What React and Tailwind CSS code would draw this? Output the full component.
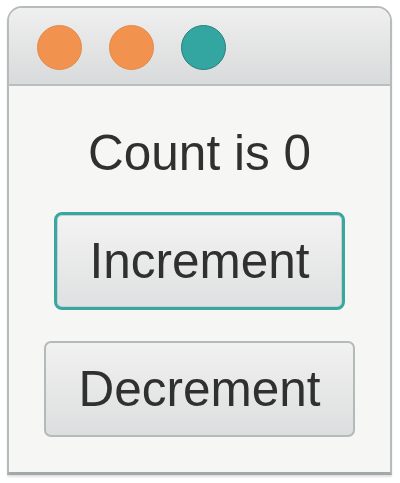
import { useState } from 'react'

export default function App() {
  const [count, setCount] = useState(0)

  return (
    <div className="w-[400px] h-[483px] bg-white pt-[6px] pl-[7px]" style={{ fontFamily: '"Liberation Sans", Arial, sans-serif' }}>
      <div className="w-[385px] h-[469px] flex flex-col rounded-t-[15px] border-2 border-b-[3px] border-[#b6bbbb] border-b-[#a3a8a8] overflow-hidden shadow-[0_2px_2px_rgba(0,0,0,0.12)]">
        {/* title bar */}
        <div className="h-[78px] shrink-0 flex items-center gap-[27px] pl-[28px] pt-[3px] bg-gradient-to-b from-[#efefef] to-[#d9dadb] border-b-2 border-[#b9bebe]">
          <span className="w-[45px] h-[45px] rounded-full bg-[#f1934f] border border-[#e48a4b]" />
          <span className="w-[45px] h-[45px] rounded-full bg-[#f1934f] border border-[#e48a4b]" />
          <span className="w-[45px] h-[45px] rounded-full bg-[#33a6a1] border border-[#2a7f7c]" />
        </div>

        {/* content */}
        <div className="flex-1 bg-[#f6f6f4] flex flex-col items-center pt-[42px] text-[#303030]">
          <p className="text-[49.5px] leading-none h-[49px]">Count is {count}</p>

          <button
            onClick={() => setCount(c => c + 1)}
            className="mt-[35px] h-[98px] px-[32px] rounded-[8px] border-[3px] border-[#36a8a1] bg-gradient-to-b from-[#f3f3f3] to-[#dfe0e1] shadow-[inset_0_0_0_1px_#cdd0d0] text-[49.5px] leading-none text-[#303030]"
          >
            Increment
          </button>

          <button
            onClick={() => setCount(c => c - 1)}
            className="mt-[31px] h-[96px] px-[32px] rounded-[7px] border-2 border-[#b4b9ba] bg-gradient-to-b from-[#f1f1f1] to-[#dddedf] text-[49.5px] leading-none text-[#303030]"
          >
            Decrement
          </button>
        </div>
      </div>
    </div>
  )
}
